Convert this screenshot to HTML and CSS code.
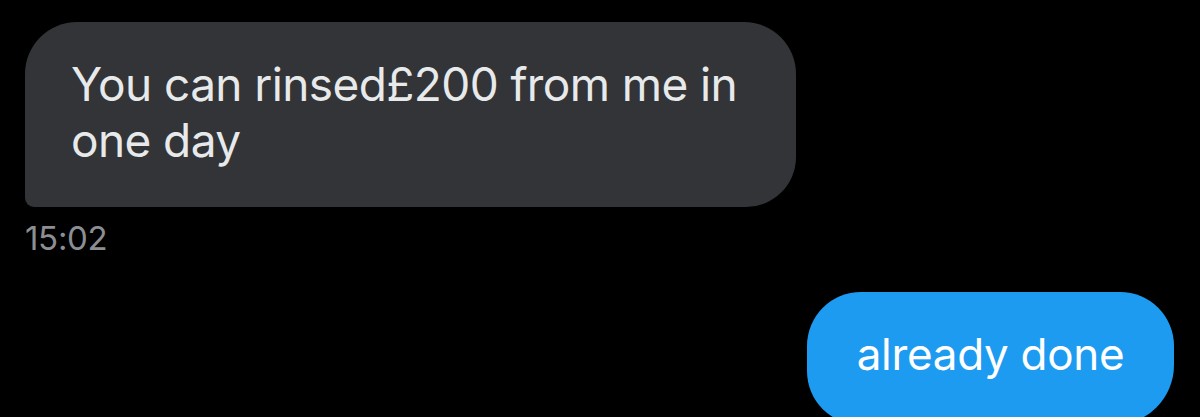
FILE: index.html
```html
<!DOCTYPE html>
<html lang="en">
<head>
<meta charset="utf-8">
<link rel="stylesheet" href="styles.css">
</head>
<body>
<div class="thread">
  <div class="msg msg-in">
    <div class="bubble bubble-in">You can rinsed£200 from me in<br>one day</div>
    <div class="time">15:02</div>
  </div>
  <div class="msg msg-out">
    <div class="bubble bubble-out">already done</div>
  </div>
</div>
</body>
</html>
```
FILE: styles.css
```css
html, body {
  margin: 0;
  padding: 0;
  background: #000;
}
body {
  width: 1200px;
  height: 417px;
  overflow: hidden;
  font-family: Inter, "Liberation Sans", sans-serif;
}
.thread {
  display: flex;
  flex-direction: column;
  padding: 22px 25px 0 25px;
}
.msg {
  display: flex;
  flex-direction: column;
}
.msg-in {
  align-items: flex-start;
}
.msg-out {
  align-items: flex-end;
  margin-top: 34px;
}
.bubble {
  box-sizing: border-box;
}
.bubble-in {
  width: 771px;
  height: 185px;
  background: #323437;
  color: #e7e9ea;
  border-radius: 52px 52px 50px 9px;
  font-size: 46px;
  line-height: 56px;
  padding: 34px 40px 0 46px;
  letter-spacing: -0.6px;
}
.time {
  margin-top: 11px;
  font-size: 33px;
  line-height: 40px;
  color: #8b8e92;
  letter-spacing: -0.3px;
}
.bubble-out {
  margin-right: 1px;
  width: 367px;
  height: 133px;
  padding-bottom: 9px;
  background: #1d9bf0;
  color: #fff;
  border-radius: 54px 54px 60px 54px;
  font-size: 44px;
  line-height: 124px;
  text-align: center;
  letter-spacing: -0.3px;
}
```
